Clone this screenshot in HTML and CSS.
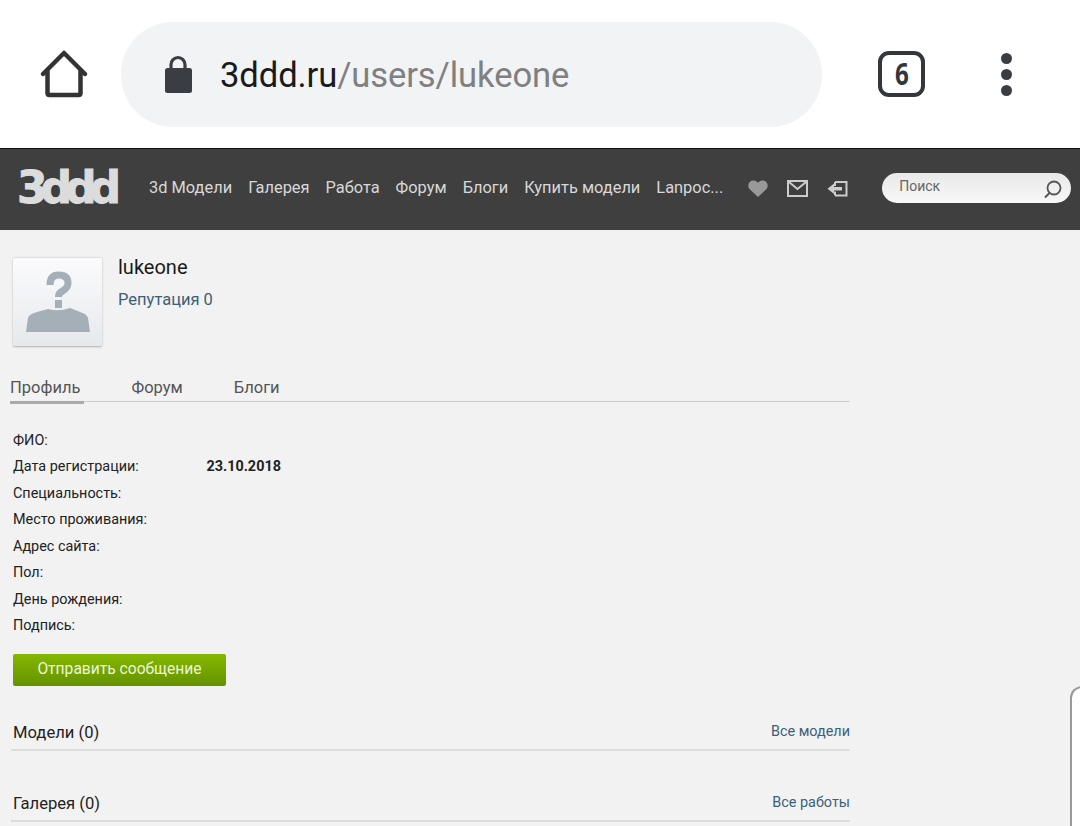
FILE: index.html
```html
<!DOCTYPE html>
<html lang="ru">
<head>
    <meta charset="UTF-8">
    <meta name="viewport" content="width=device-width, initial-scale=1.0">
    <title>lukeone - 3ddd.ru</title>
    <link rel="stylesheet" href="styles.css">
</head>
<body>
    <div class="browser-bar">
        <svg class="home-icon" width="50" height="50" viewBox="0 0 50 50">
            <path d="M4 25 L25 4 L46 25 M8.500 21 V44 Q8.500 46 10.500 46 H39.500 Q41.500 46 41.500 44 V21" fill="#fff" stroke="#333" stroke-width="4.500" stroke-linecap="round" stroke-linejoin="round"/>
        </svg>
        <div class="url-pill">
            <svg class="lock-icon" width="28" height="38" viewBox="0 0 28 38">
                <path d="M7 15 V9.500 A7 7 0 0 1 21 9.500 V15" fill="none" stroke="#3a3d42" stroke-width="3.200"/>
                <rect x="1" y="13" width="27" height="25" rx="2.500" fill="#3a3d42"/>
            </svg>
            <span class="url-text"><span class="url-host">3ddd.ru</span>/users/lukeone</span>
        </div>
        <div class="tab-count"><span>6</span></div>
        <div class="menu-dots"><i></i><i></i><i></i></div>
    </div>

    <header class="site-nav">
        <div class="logo">3ddd</div>
        <nav class="nav-links">
            <a>3d Модели</a>
            <a>Галерея</a>
            <a>Работа</a>
            <a>Форум</a>
            <a>Блоги</a>
            <a>Купить модели</a>
            <a>Lanрос...</a>
        </nav>
        <div class="nav-icons">
            <svg width="20" height="17" viewBox="0 0 20 17">
                <path d="M10 17 L2 9.500 C-1 6.500 0 1 5 0.500 C7.500 0.300 9 1.500 10 3 C11 1.500 12.500 0.300 15 0.500 C20 1 21 6.500 18 9.500 Z" fill="#999"/>
            </svg>
            <svg width="21" height="17" viewBox="0 0 21 17">
                <rect x="1" y="1" width="19" height="15" fill="none" stroke="#ccc" stroke-width="2"/>
                <path d="M2 2 L10.500 9 L19 2" fill="none" stroke="#ccc" stroke-width="2"/>
            </svg>
            <svg width="21" height="17" viewBox="0 0 21 17">
                <path d="M8 2 H19.500 V15.500 H8 M8 6 V2 M8 15.500 V11.500" fill="none" stroke="#ccc" stroke-width="2"/>
                <path d="M0.500 8.700 L7 3.500 V7 H15 V10.500 H7 V14 Z" fill="#ccc"/>
            </svg>
        </div>
        <div class="search-box">
            <span>Поиск</span>
            <svg width="20" height="20" viewBox="0 0 20 20">
                <circle cx="11" cy="9" r="6.500" fill="none" stroke="#555" stroke-width="1.800"/>
                <path d="M6.500 14 L2 18.500" stroke="#555" stroke-width="2"/>
            </svg>
        </div>
    </header>

    <main class="content">
        <section class="user-head">
            <div class="avatar">
                <svg width="66" height="62" viewBox="0 0 66 62">
                    <path d="M1 61 L3 47 Q4 43 12 41 L23 38 Q34 41 45 37 L55 41 Q62 43 63 47 L65 61 Z" fill="#a5afb7"/>
                    <path d="M25 14 Q25 4 33.500 4 Q43 4 43 12 Q43 17 37.500 20 Q33.500 22 33.500 26" fill="none" stroke="#a5afb7" stroke-width="7"/>
                    <rect x="30" y="29" width="7" height="8" fill="#a5afb7"/>
                </svg>
            </div>
            <div class="user-info">
                <h1>lukeone</h1>
                <a class="rep-link">Репутация 0</a>
            </div>
        </section>

        <div class="tabs">
            <a class="tab active">Профиль</a>
            <a class="tab">Форум</a>
            <a class="tab">Блоги</a>
        </div>

        <dl class="profile-rows">
            <div class="row"><dt>ФИО:</dt><dd></dd></div>
            <div class="row"><dt>Дата регистрации:</dt><dd>23.10.2018</dd></div>
            <div class="row"><dt>Специальность:</dt><dd></dd></div>
            <div class="row"><dt>Место проживания:</dt><dd></dd></div>
            <div class="row"><dt>Адрес сайта:</dt><dd></dd></div>
            <div class="row"><dt>Пол:</dt><dd></dd></div>
            <div class="row"><dt>День рождения:</dt><dd></dd></div>
            <div class="row"><dt>Подпись:</dt><dd></dd></div>
        </dl>

        <button class="send-btn">Отправить сообщение</button>

        <div class="block-head first">
            <h2>Модели (0)</h2>
            <a>Все модели</a>
        </div>
        <div class="block-head">
            <h2>Галерея (0)</h2>
            <a>Все работы</a>
        </div>
    </main>

    <div class="side-panel"></div>
</body>
</html>
```

FILE: styles.css
```css
/* Общие стили */
html, body {
    height: 826px;
    overflow: hidden;
}

body {
    margin: 0;
    font-family: Roboto, "Liberation Sans", sans-serif;
    background-color: #f2f2f2;
    position: relative;
}

/* Панель браузера */
.browser-bar {
    height: 148px;
    background-color: #fff;
    display: flex;
    align-items: center;
    box-sizing: border-box;
}

.home-icon {
    margin-left: 39px;
    flex: none;
}

.url-pill {
    margin-left: 32px;
    margin-top: 1px;
    width: 701px;
    height: 105px;
    border-radius: 52px;
    background-color: #f1f3f4;
    display: flex;
    align-items: center;
    flex: none;
}

.lock-icon {
    margin-left: 43px;
    margin-top: -2px;
}

.url-text {
    margin-left: 28px;
    font-size: 34.600px;
    letter-spacing: -0.1px;
    color: #808080;
}

.url-host {
    color: #1a1a1a;
}

.tab-count {
    margin-left: 56px;
    margin-top: -1px;
    width: 47px;
    height: 46px;
    box-sizing: border-box;
    border: 4px solid #33363a;
    border-radius: 11px;
    font-family: "Open Sans", sans-serif;
    font-weight: 700;
    font-size: 31px;
    line-height: 37px;
    text-align: center;
    color: #33363a;
}

.tab-count span {
    display: inline-block;
    transform: scaleX(0.78);
}

.menu-dots {
    margin-left: 76px;
    display: flex;
    flex-direction: column;
    gap: 5px;
}

.menu-dots i {
    display: block;
    width: 11px;
    height: 11px;
    border-radius: 50%;
    background-color: #3a3d42;
}

/* Навигация сайта */
.site-nav {
    height: 82px;
    box-sizing: border-box;
    border-top: 1px solid #111;
    background-color: #3f3f3f;
    display: flex;
    align-items: center;
}

.logo {
    margin-left: 17px;
    margin-top: -4px;
    width: 103px;
    font-family: "DejaVu Sans", sans-serif;
    font-weight: 700;
    font-size: 44px;
    letter-spacing: -7px;
    line-height: 44px;
    color: #dcdcdc;
    -webkit-text-stroke: 1px #dcdcdc;
    flex: none;
}

.nav-links {
    margin-left: 29px;
    margin-top: -4px;
    display: flex;
    gap: 16px;
    font-size: 16.400px;
    color: #d8d8d8;
    white-space: nowrap;
    flex: none;
}

.nav-icons {
    margin-left: 25px;
    margin-top: -2px;
    display: flex;
    align-items: center;
    gap: 19px;
    flex: none;
}

.search-box {
    margin-left: 34px;
    margin-top: -4px;
    width: 189px;
    height: 30px;
    box-sizing: border-box;
    padding: 0 8px 0 17px;
    border-radius: 15px;
    background: linear-gradient(#e9e9e9, #f8f8f8);
    display: flex;
    align-items: center;
    justify-content: space-between;
    font-size: 14px;
    color: #666;
    flex: none;
}

.search-box span {
    margin-top: -4px;
}

.search-box svg {
    margin-top: 2px;
}

/* Контент */
.content {
    width: 840px;
    margin-left: 10px;
}

.user-head {
    display: flex;
    padding: 28px 0 0 3px;
}

.avatar {
    width: 89px;
    height: 89px;
    box-sizing: border-box;
    padding-top: 13px;
    background: linear-gradient(#fbfbfd, #e6e9ec);
    border-bottom: 1px solid #c4c4c4;
    border-radius: 2px;
    box-shadow: 0 0 2px rgba(0, 0, 0, 0.3);
    text-align: center;
}

.user-info {
    margin-left: 16px;
}

.user-info h1 {
    margin: -1px 0 0;
    font-size: 20px;
    font-weight: 400;
    line-height: 20px;
    color: #1a1a1a;
}

.rep-link {
    display: block;
    margin-top: 13px;
    font-size: 16.500px;
    line-height: 19px;
    color: #3c6078;
}

.tabs {
    margin-top: 31px;
    display: flex;
    gap: 47px;
    height: 23px;
    border-bottom: 1px solid #ccc;
}

.tab {
    padding-right: 4px;
    font-size: 16.500px;
    line-height: 19px;
    color: #555;
    box-sizing: border-box;
    height: 26px;
}

.tab.active {
    border-bottom: 3px solid #aaa;
}

.profile-rows {
    margin: 25.500px 0 0 3px;
    font-size: 14.400px;
    color: #222;
}

.row {
    display: flex;
    height: 26.500px;
    line-height: 26px;
}

.row dt {
    width: 193.500px;
}

.row dd {
    margin: 0;
    font-weight: 700;
}

.send-btn {
    display: block;
    margin: 14px 0 0 3px;
    width: 213px;
    height: 32px;
    padding: 0 0 2px;
    border: none;
    border-radius: 2px;
    background: linear-gradient(#84b800, #659200);
    font-family: inherit;
    font-size: 15.600px;
    color: #eef5da;
    text-align: center;
}

.block-head {
    margin-top: 38px;
    margin-left: 1px;
    height: 30px;
    padding-bottom: 1px;
    display: flex;
    justify-content: space-between;
    align-items: center;
    border-bottom: 2px solid #dcdcdc;
}

.block-head.first {
    margin-top: 32px;
}

.block-head h2 {
    margin: 0 0 0 2px;
    font-size: 16.600px;
    font-weight: 400;
    color: #222;
}

.block-head a {
    font-size: 14.400px;
    color: #3c6078;
    margin-top: -2px;
}

/* Край панели справа, поверх страницы */
.side-panel {
    position: absolute;
    left: 1070px;
    top: 686px;
    width: 20px;
    height: 160px;
    background-color: #fff;
    border: 2px solid #999;
    border-right: none;
    border-radius: 12px 0 0 0;
    box-sizing: border-box;
}
```
